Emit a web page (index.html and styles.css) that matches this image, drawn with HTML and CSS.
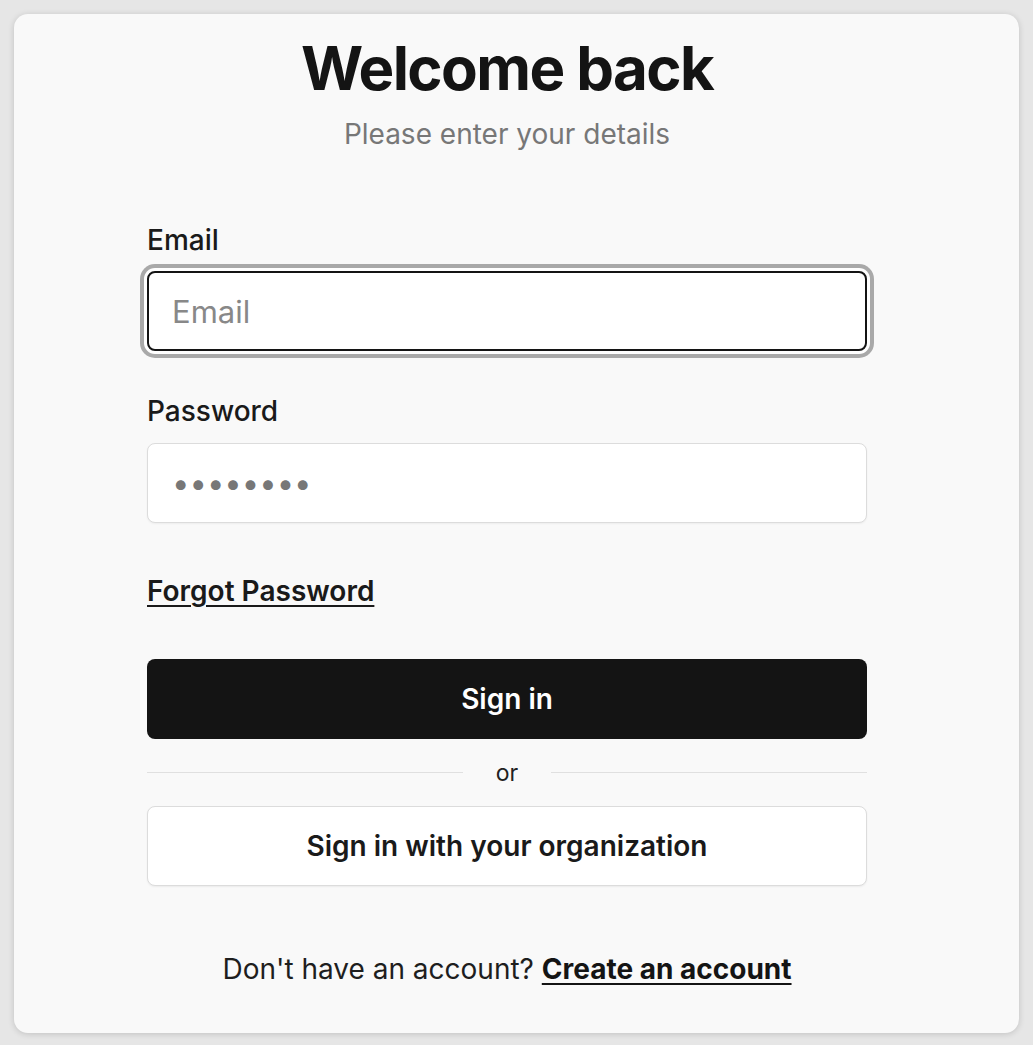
FILE: index.html
```html
<!DOCTYPE html>
<html lang="en">
<head>
  <meta charset="UTF-8" />
  <meta name="viewport" content="width=device-width, initial-scale=1" />
  <title>Welcome back</title>
  <link rel="stylesheet" href="styles.css">
</head>
<body>

  <!-- Tarjeta de inicio de sesión -->
  <div class="card">
    <h1 class="titulo">Welcome back</h1>
    <p class="subtitulo">Please enter your details</p>

    <form class="formulario" onsubmit="return false">
      <label class="etiqueta" for="email">Email</label>
      <input class="campo campo-activo" type="email" id="email" placeholder="Email" />

      <label class="etiqueta etiqueta-pass" for="password">Password</label>
      <input class="campo" type="password" id="password" value="12345678" />

      <a class="olvido" href="#">Forgot Password</a>

      <button class="boton boton-negro" type="submit">Sign in</button>

      <div class="separador">
        <span class="linea"></span>
        <span class="separador-texto">or</span>
        <span class="linea"></span>
      </div>

      <button class="boton boton-blanco" type="button">Sign in with your organization</button>
    </form>

    <p class="pie">Don't have an account? <a href="#">Create an account</a></p>
  </div>

</body>
</html>
```

FILE: styles.css
```css
body {
  margin: 0;
  padding: 14px;
  background: #e6e6e6;
  font-family: Inter, 'Noto Sans', sans-serif;
  color: #161616;
}

/* Tarjeta */
.card {
  background: #f9f9f9;
  border-radius: 14px;
  box-shadow: 0 1px 6px rgba(0, 0, 0, 0.16);
  padding: 15px 152px 46px 133px;
  min-height: calc(100vh - 28px);
  box-sizing: border-box;
}

.titulo {
  margin: 0;
  text-align: center;
  font-size: 60px;
  font-weight: 700;
  line-height: 78px;
  letter-spacing: -1.6px;
  color: #141414;
}

.subtitulo {
  margin: 11px 0 0;
  text-align: center;
  font-size: 28px;
  line-height: 1.2;
  color: #777;
}

/* Formulario */
.formulario {
  display: flex;
  flex-direction: column;
  margin-top: 72px;
}

.etiqueta {
  font-size: 28px;
  font-weight: 500;
  line-height: 1.2;
  color: #1a1a1a;
}

.etiqueta-pass {
  margin-top: 44px;
}

.campo {
  margin-top: 14px;
  height: 80px;
  box-sizing: border-box;
  border: 1px solid #dcdcdc;
  border-radius: 8px;
  background: #fff;
  padding: 0 24px;
  font-family: inherit;
  font-size: 31px;
  color: #777;
  box-shadow: 0 1px 2px rgba(0, 0, 0, 0.05);
  outline: none;
}

.campo::placeholder {
  color: #888;
}

.campo-activo {
  border: 2px solid #141414;
  padding: 0 23px;
  box-shadow: 0 0 0 3px #fff, 0 0 0 7px #a9a9a9;
}

.olvido {
  align-self: flex-start;
  margin-top: 52px;
  font-size: 28px;
  font-weight: 600;
  line-height: 1.2;
  color: #1a1a1a;
  text-decoration: underline;
  text-decoration-thickness: 2px;
  text-underline-offset: 4px;
}

/* Botones */
.boton {
  height: 80px;
  border-radius: 8px;
  font-family: inherit;
  font-size: 28px;
  font-weight: 600;
  cursor: pointer;
}

.boton-negro {
  margin-top: 51px;
  background: #141414;
  color: #fff;
  border: none;
}

.boton-blanco {
  background: #fff;
  color: #1a1a1a;
  border: 1px solid #dcdcdc;
  box-shadow: 0 1px 2px rgba(0, 0, 0, 0.06);
}

.separador {
  height: 67px;
  display: flex;
  align-items: center;
  gap: 33px;
}

.linea {
  flex: 1;
  height: 1px;
  background: #e0e0e0;
}

.separador-texto {
  font-size: 23px;
  color: #222;
}

.pie {
  margin: 67px 0 0;
  text-align: center;
  font-size: 28px;
  line-height: 1.2;
  color: #1e1e1e;
}

.pie a {
  color: #141414;
  font-weight: 700;
  text-decoration: underline;
  text-decoration-thickness: 2px;
  text-underline-offset: 4px;
}
```
